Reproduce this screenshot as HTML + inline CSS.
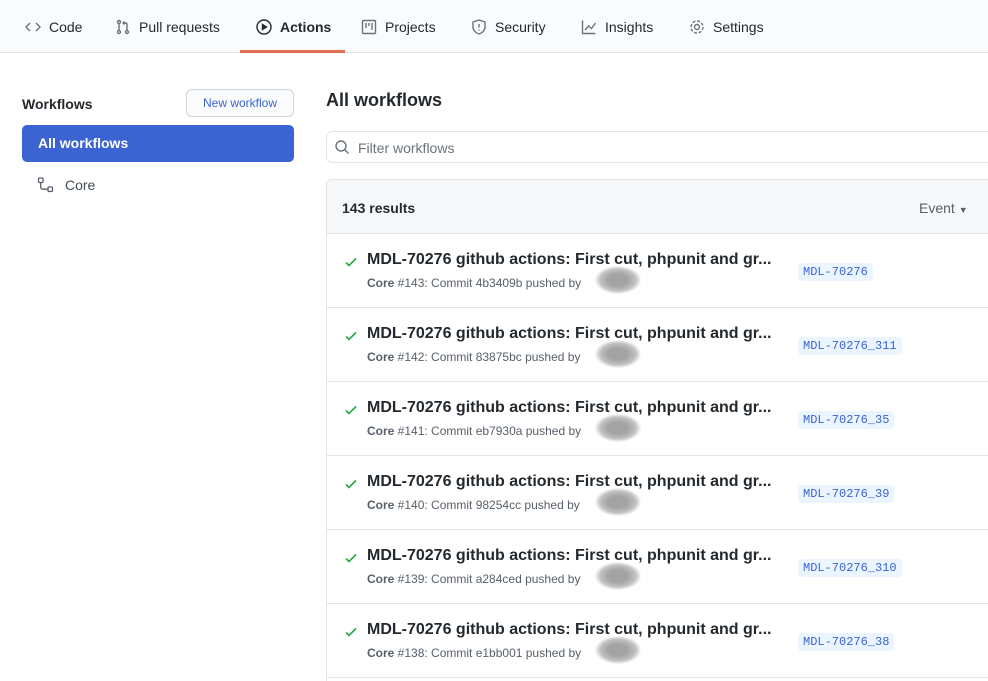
<!DOCTYPE html>
<html style="width:988px;height:681px;overflow:hidden"><head><style>
*{box-sizing:border-box;margin:0;padding:0}
body{width:988px;height:681px;overflow:hidden;background:#fff;font-family:"Liberation Sans",sans-serif;color:#24292e;position:relative}
.nav{position:absolute;left:0;top:0;width:988px;height:53px;background:#fafbfc;border-bottom:1px solid #e1e4e8}
.tab{position:absolute;top:19px;font-size:14px;color:#24292e;display:flex;align-items:center;gap:8px}
.tab svg{width:16px;height:16px;fill:none;stroke:#6a737d;stroke-width:1.4}
.act{position:absolute;left:240px;top:50px;width:105px;height:3px;background:#e36f52}
.abs{position:absolute}
.row{position:absolute;left:326px;width:662px;height:74px;border-top:1px solid #e1e4e8}
.row .chk{position:absolute;left:18px;top:21px}
.row .t{position:absolute;left:41px;top:17px;font-size:16px;font-weight:bold;color:#24292e;white-space:nowrap}
.row .s{position:absolute;left:41px;top:42px;font-size:12px;color:#586069;white-space:nowrap}
.row .s b{color:#586069}
.row .tag{position:absolute;left:472px;top:29px;font-family:"Liberation Mono",monospace;font-size:12px;color:#3b64d2;background:#eaf5ff;border-radius:4px;padding:2px 5px}
.blob{position:absolute;left:228px;top:-10px;width:46px;height:28px;border-radius:40%;background:radial-gradient(ellipse,#999 30%,#bbb 55%,transparent 72%);opacity:.9}
</style></head><body>
<div class="nav">
 <div class="tab" style="left:25px"><svg viewBox="0 0 16 16"><path d="M5 4L1 8l4 4M11 4l4 4-4 4"/></svg>Code</div>
 <div class="tab" style="left:115px"><svg viewBox="0 0 16 16"><circle cx="4" cy="3" r="1.5"/><circle cx="4" cy="13" r="1.5"/><circle cx="12" cy="13" r="1.5"/><path d="M4 4.5v7M12 11.5V5.5c0-1-.5-1.5-1.5-1.5H8M9.5 2.5L8 4l1.5 1.5"/></svg>Pull requests</div>
 <div class="tab" style="left:256px;font-weight:bold"><svg viewBox="0 0 16 16" style="stroke:#24292e"><circle cx="8" cy="8" r="7"/><path d="M6.5 5.5v5l4-2.5z" fill="#24292e"/></svg>Actions</div>
 <div class="tab" style="left:361px"><svg viewBox="0 0 16 16"><rect x="1.5" y="1.5" width="13" height="13" rx="1"/><path d="M5 4v5M8 4v3M11 4v7"/></svg>Projects</div>
 <div class="tab" style="left:471px"><svg viewBox="0 0 16 16"><path d="M8 1l6 2v5c0 3.5-3 6-6 7-3-1-6-3.5-6-7V3z"/><path d="M8 5v3.5M8 10.5v1"/></svg>Security</div>
 <div class="tab" style="left:581px"><svg viewBox="0 0 16 16"><path d="M1.5 1.5v13h13M4 11l3.5-4 3 2.5L14.5 4"/></svg>Insights</div>
 <div class="tab" style="left:689px"><svg viewBox="0 0 16 16"><circle cx="8" cy="8" r="2.5"/><circle cx="8" cy="8" r="6" stroke-dasharray="3 1.7"/></svg>Settings</div>
 <div class="act"></div>
</div>

<div class="abs" style="left:22px;top:96px;font-size:14px;font-weight:bold">Workflows</div>
<div class="abs" style="left:186px;top:89px;width:108px;height:28px;border:1px solid #d1d5da;border-radius:6px;background:#fafbfc;font-size:12px;color:#3b64d2;text-align:center;line-height:26px">New workflow</div>
<div class="abs" style="left:22px;top:125px;width:272px;height:37px;background:#3b64d2;border-radius:5px;color:#fff;font-size:14px;font-weight:bold;line-height:37px;padding-left:16px">All workflows</div>
<svg class="abs" style="left:37px;top:177px" width="18" height="16" viewBox="0 0 18 16" fill="none" stroke="#586069" stroke-width="1.3"><rect x="1.5" y="1" width="4.5" height="4.5" rx="1"/><rect x="11" y="10" width="4.5" height="4.5" rx="1"/><path d="M3.7 5.5v4.5c0 1.5 1 2.2 2.5 2.2H11"/></svg>
<div class="abs" style="left:65px;top:177px;font-size:14px;color:#444d56">Core</div>

<div class="abs" style="left:326px;top:90px;font-size:18px;font-weight:bold">All workflows</div>
<div class="abs" style="left:326px;top:131px;width:670px;height:32px;border:1px solid #e1e4e8;border-radius:6px"></div>
<svg class="abs" style="left:334px;top:139px" width="16" height="16" viewBox="0 0 16 16" fill="none" stroke="#6a737d" stroke-width="1.4"><circle cx="7" cy="7" r="5"/><path d="M10.5 10.5L14.5 14.5"/></svg>
<div class="abs" style="left:358px;top:140px;font-size:14px;color:#6a737d">Filter workflows</div>

<div class="abs" style="left:326px;top:179px;width:670px;height:502px;border:1px solid #e1e4e8;border-bottom:none;border-radius:6px 6px 0 0;overflow:hidden">
 <div style="height:54px;background:#f6f8fa;"></div>
</div>
<div class="abs" style="left:342px;top:200px;font-size:14px;font-weight:bold">143 results</div>
<div class="abs" style="left:919px;top:200px;font-size:14px;color:#586069">Event <span style="font-size:9px">▼</span></div>

<div class="row" style="top:233px"><svg class="chk" width="14" height="14" viewBox="0 0 14 14"><path d="M2 7.5l3 3 7-7" fill="none" stroke="#28a745" stroke-width="1.6"/></svg><div class="t">MDL-70276 github actions: First cut, phpunit and gr...</div><div class="s"><b>Core</b> #143: Commit 4b3409b pushed by<span class="blob"></span></div><div class="tag">MDL-70276</div></div>
<div class="row" style="top:307px"><svg class="chk" width="14" height="14" viewBox="0 0 14 14"><path d="M2 7.5l3 3 7-7" fill="none" stroke="#28a745" stroke-width="1.6"/></svg><div class="t">MDL-70276 github actions: First cut, phpunit and gr...</div><div class="s"><b>Core</b> #142: Commit 83875bc pushed by<span class="blob"></span></div><div class="tag">MDL-70276_311</div></div>
<div class="row" style="top:381px"><svg class="chk" width="14" height="14" viewBox="0 0 14 14"><path d="M2 7.5l3 3 7-7" fill="none" stroke="#28a745" stroke-width="1.6"/></svg><div class="t">MDL-70276 github actions: First cut, phpunit and gr...</div><div class="s"><b>Core</b> #141: Commit eb7930a pushed by<span class="blob"></span></div><div class="tag">MDL-70276_35</div></div>
<div class="row" style="top:455px"><svg class="chk" width="14" height="14" viewBox="0 0 14 14"><path d="M2 7.5l3 3 7-7" fill="none" stroke="#28a745" stroke-width="1.6"/></svg><div class="t">MDL-70276 github actions: First cut, phpunit and gr...</div><div class="s"><b>Core</b> #140: Commit 98254cc pushed by<span class="blob"></span></div><div class="tag">MDL-70276_39</div></div>
<div class="row" style="top:529px"><svg class="chk" width="14" height="14" viewBox="0 0 14 14"><path d="M2 7.5l3 3 7-7" fill="none" stroke="#28a745" stroke-width="1.6"/></svg><div class="t">MDL-70276 github actions: First cut, phpunit and gr...</div><div class="s"><b>Core</b> #139: Commit a284ced pushed by<span class="blob"></span></div><div class="tag">MDL-70276_310</div></div>
<div class="row" style="top:603px"><svg class="chk" width="14" height="14" viewBox="0 0 14 14"><path d="M2 7.5l3 3 7-7" fill="none" stroke="#28a745" stroke-width="1.6"/></svg><div class="t">MDL-70276 github actions: First cut, phpunit and gr...</div><div class="s"><b>Core</b> #138: Commit e1bb001 pushed by<span class="blob"></span></div><div class="tag">MDL-70276_38</div></div>
<div class="row" style="top:677px;height:4px"></div>
</body></html>
